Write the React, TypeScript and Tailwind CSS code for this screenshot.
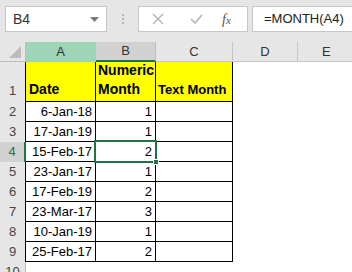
import React from 'react';

const rows: [string, string][] = [
  ['6-Jan-18', '1'],
  ['17-Jan-19', '1'],
  ['15-Feb-17', '2'],
  ['23-Jan-17', '1'],
  ['17-Feb-19', '2'],
  ['23-Mar-17', '3'],
  ['10-Jan-19', '1'],
  ['25-Feb-17', '2'],
];

function FormulaBar() {
  return (
    <div className="h-[42px] flex items-start pt-[6px] pl-[5px]">
      <div className="w-[102px] h-[26px] bg-white border border-[#c6c6c6] flex items-center justify-between pl-[7px] pr-[7px]">
        <span className="text-[14px] text-[#333]">B4</span>
        <svg width="9" height="5" viewBox="0 0 9 5">
          <path d="M0 0h9L4.5 5z" fill="#7a7a7a" />
        </svg>
      </div>
      <div className="w-[31px] h-[26px] flex flex-col items-center justify-center gap-[2px]">
        <span className="w-[2px] h-[2px] bg-[#b5b5b5]" />
        <span className="w-[2px] h-[2px] bg-[#b5b5b5]" />
        <span className="w-[2px] h-[2px] bg-[#b5b5b5]" />
      </div>
      <div className="w-[110px] h-[26px] bg-white border border-[#c6c6c6] flex items-center">
        <svg width="12" height="12" viewBox="0 0 12 12" className="ml-[13px]">
          <path d="M1 1l10 10M11 1L1 11" stroke="#b3b3b3" strokeWidth="1.4" />
        </svg>
        <svg width="13" height="10" viewBox="0 0 13 10" className="ml-[26px]">
          <path d="M1 5l4 4L12 1" stroke="#b3b3b3" strokeWidth="1.6" fill="none" />
        </svg>
        <span className="ml-[19px] text-[14px] italic text-[#555]" style={{ fontFamily: '"Liberation Serif", serif' }}>
          f<span className="text-[11px]">x</span>
        </span>
      </div>
      <div className="ml-[4px] flex-1 h-[26px] bg-white border border-[#c6c6c6] border-r-0 flex items-center pl-[11px]">
        <span className="text-[13px] text-[#222]">=MONTH(A4)</span>
      </div>
    </div>
  );
}

export default function App() {
  return (
    <div
      className="w-[352px] h-[272px] overflow-hidden bg-[#e6e6e6] relative"
      style={{ fontFamily: '"Liberation Sans", Arial, sans-serif' }}
    >
      <FormulaBar />
      <div className="grid grid-cols-[26px_70px_60px_77px_65px_1fr] grid-rows-[20px_40px_repeat(9,20px)] bg-white">
        {/* header row */}
        <div className="bg-[#e6e6e6] border-r border-b border-[#bdbdbd] flex items-end justify-end p-[3px]">
          <svg width="12" height="12" viewBox="0 0 12 12" className="mr-[1px]">
            <path d="M12 0V12H0z" fill="#bcbcbc" />
          </svg>
        </div>
        <div className="bg-[#9fd5b7] border-r border-b border-[#9fd5b7] flex items-center justify-center text-[13px] text-[#333]">A</div>
        <div className="bg-[#d2d2d2] border-r border-[#bdbdbd] border-b-2 border-b-[#217346] flex items-center justify-center text-[13px] text-[#333]">B</div>
        <div className="bg-[#e6e6e6] border-r border-b border-[#c6c6c6] flex items-center justify-center text-[13px] text-[#333]">C</div>
        <div className="bg-[#e6e6e6] border-r border-b border-[#c6c6c6] flex items-center justify-center text-[13px] text-[#333]">D</div>
        <div className="bg-[#e6e6e6] border-b border-[#c6c6c6] flex items-center justify-start pl-[24px] text-[13px] text-[#333]">E</div>

        {/* row 1 */}
        <div className="bg-[#e6e6e6] border-r border-black flex items-end justify-center pb-[2px] text-[13px] text-[#444]">1</div>
        <div className="bg-[#ffff00] border-r border-b border-black flex items-end px-[3px] pb-[2px] text-[14px] font-bold leading-[19px]">Date</div>
        <div className="bg-[#ffff00] border-r border-b border-black flex flex-col justify-end px-[2px] pb-[2px] text-[14px] font-bold leading-[19px] whitespace-nowrap overflow-hidden">
          <span>Numeric</span>
          <span>Month</span>
        </div>
        <div className="bg-[#ffff00] border-r border-b border-black flex items-end px-[2px] pb-[2px] text-[13px] font-bold leading-[19px] whitespace-nowrap overflow-hidden">Text Month</div>
        <div />
        <div />

        {rows.map(([date, num], i) => {
          const n = i + 2;
          const active = n === 4;
          return (
            <React.Fragment key={n}>
              <div
                className={
                  active
                    ? 'bg-[#d2d2d2] border-r-2 border-[#217346] flex items-center justify-center text-[13px] text-[#217346]'
                    : 'bg-[#e6e6e6] border-r border-black flex items-center justify-center text-[13px] text-[#444]'
                }
              >
                {n}
              </div>
              <div className="border-r border-b border-black flex items-center justify-end pr-[3px] text-[13px]">{date}</div>
              <div className="border-r border-b border-black flex items-center justify-end pr-[3px] text-[13px]">{num}</div>
              <div className="border-r border-b border-black" />
              <div />
              <div />
            </React.Fragment>
          );
        })}

        <div className="bg-[#e6e6e6] border-r border-[#bdbdbd] flex items-center justify-center text-[13px] text-[#444]">10</div>
        <div />
        <div />
        <div />
        <div />
        <div />
      </div>

      {/* active cell B4 */}
      <div className="absolute left-[94px] top-[140px] w-[63px] h-[23px] border-2 border-[#217346] pointer-events-none" />
      <div className="absolute left-[153px] top-[159px] w-[6px] h-[6px] bg-[#217346] border border-white pointer-events-none" />
    </div>
  );
}
